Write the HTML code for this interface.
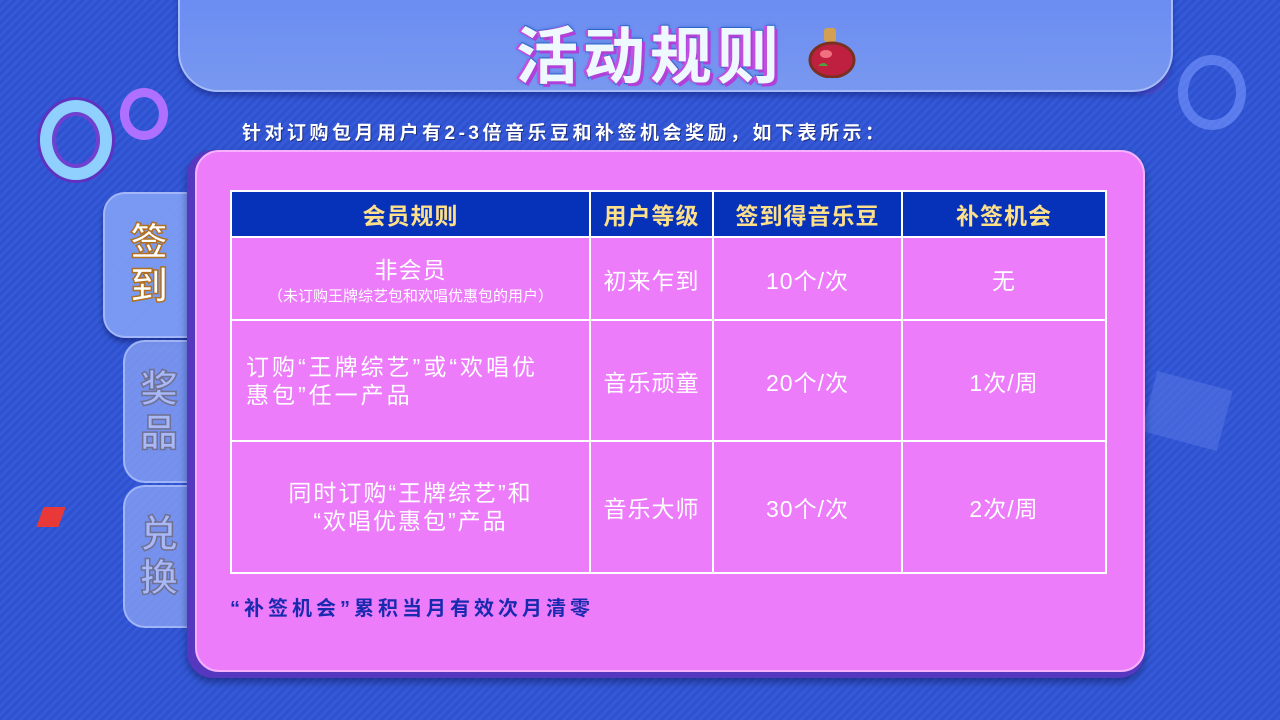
<!DOCTYPE html>
<html><head><meta charset="utf-8"><style>
*{margin:0;padding:0;box-sizing:border-box}
body{width:1280px;height:720px;overflow:hidden;background:#2f55d6;font-family:"Liberation Sans","Noto Sans CJK SC",sans-serif;position:relative}
.bg{position:absolute;inset:0;background:repeating-linear-gradient(135deg,rgba(255,255,255,0.03) 0 3px,rgba(0,0,0,0.03) 3px 6px)}
.banner{position:absolute;left:178px;top:-10px;width:995px;height:102px;background:linear-gradient(#6a8cf2,#7898f0);border-radius:0 0 40px 40px;border:2px solid #a6bcf8;box-shadow:0 4px 6px rgba(20,30,120,.5)}
.title{position:absolute;left:516px;top:6px;font-size:62px;font-weight:bold;color:#eef8ff;letter-spacing:5px;text-shadow:-3px 0 #c050e0,3px 3px #b040d8,0 0 4px #2060c0;-webkit-text-stroke:2px #3a6ad0;paint-order:stroke fill}
.pot{position:absolute;left:808px;top:26px;width:48px;height:52px}
.sub{position:absolute;left:242px;top:118px;font-size:19px;font-weight:bold;color:#fff;letter-spacing:3.5px;text-shadow:1px 1px 0 #203080}
.ring{position:absolute;border-radius:50%}
.panel{position:absolute;left:187px;top:150px;width:958px;height:528px;border-radius:26px;background:#5638c0;box-shadow:0 4px 8px rgba(0,0,40,.4)}
.inner{position:absolute;left:8px;top:0;right:0;bottom:6px;border-radius:24px;background:#ec7cfa;border:2px solid #f6b0ff}
.tab{position:absolute;border-radius:22px 0 0 22px;background:rgba(140,165,245,.75);border:2px solid rgba(190,205,255,.6);display:flex;flex-direction:column;align-items:center;justify-content:center;font-weight:bold;font-size:38px;line-height:44px}
table{position:absolute;left:230px;top:190px;border-collapse:collapse;color:#fff;text-align:center;table-layout:fixed;width:875px}
td,th{border:2px solid #fff;padding:0}
th{background:#0532b8;color:#ffe08a;font-size:23px;height:46px;letter-spacing:1px}
td{font-size:23px;letter-spacing:1px}
.note{position:absolute;left:230px;top:592px;font-size:20px;font-weight:bold;color:#1a2ab0;letter-spacing:4px}
</style></head><body>
<div class="bg"></div>
<div class="ring" style="left:40px;top:100px;width:72px;height:80px;border:12px solid #8fd0ff;box-shadow:inset 0 0 0 4px #7040d0,0 0 0 3px #6030c0"></div>
<div class="ring" style="left:120px;top:88px;width:48px;height:52px;border:9px solid #b070ff"></div>
<div class="ring" style="left:1178px;top:55px;width:68px;height:75px;border:10px solid rgba(120,150,255,.6)"></div>
<div class="ring" style="left:1120px;top:40px;width:50px;height:55px;border:8px solid rgba(100,80,220,.5)"></div>
<div style="position:absolute;left:1148px;top:380px;width:78px;height:62px;background:rgba(90,120,230,.5);transform:rotate(15deg)"></div>
<div style="position:absolute;left:40px;top:507px;width:22px;height:20px;background:#e83838;transform:skew(-20deg)"></div>
<div class="banner"></div>
<div class="title">活动规则</div>
<svg class="pot" viewBox="0 0 48 52"><rect x="16" y="2" width="12" height="14" rx="3" fill="#d2a050"/><ellipse cx="24" cy="34" rx="22" ry="17" fill="#c02040" stroke="#7a3020" stroke-width="3"/><ellipse cx="18" cy="28" rx="6" ry="4" fill="#f07080"/><path d="M10 40 q6-6 10 0" fill="#50a040"/></svg>
<div class="sub">针对订购包月用户有2-3倍音乐豆和补签机会奖励，如下表所示：</div>
<div class="tab" style="left:103px;top:192px;width:92px;height:146px;background:rgba(130,160,245,.9);color:#fff;-webkit-text-stroke:1.5px #b07020;box-shadow:0 4px 6px rgba(0,0,60,.4)">签<br>到</div>
<div class="tab" style="left:123px;top:340px;width:72px;height:143px;color:#a8b8f8;-webkit-text-stroke:1.5px #707090">奖<br>品</div>
<div class="tab" style="left:123px;top:485px;width:72px;height:143px;color:#a8b8f8;-webkit-text-stroke:1.5px #707090">兑<br>换</div>
<div class="panel"><div class="inner"></div></div>
<table>
<colgroup><col style="width:359px"><col style="width:123px"><col style="width:189px"><col style="width:204px"></colgroup>
<tr><th>会员规则</th><th>用户等级</th><th>签到得音乐豆</th><th>补签机会</th></tr>
<tr style="height:83px"><td><div style="font-size:23px">非会员</div><div style="font-size:15px;letter-spacing:0">（未订购王牌综艺包和欢唱优惠包的用户）</div></td><td>初来乍到</td><td>10个/次</td><td>无</td></tr>
<tr style="height:121px"><td style="text-align:left;padding-left:14px;line-height:28px;letter-spacing:3px;white-space:nowrap">订购“王牌综艺”或“欢唱优<br>惠包”任一产品</td><td>音乐顽童</td><td>20个/次</td><td>1次/周</td></tr>
<tr style="height:132px"><td style="line-height:28px;letter-spacing:2px">同时订购“王牌综艺”和<br>“欢唱优惠包”产品</td><td>音乐大师</td><td>30个/次</td><td>2次/周</td></tr>
</table>
<div class="note">“补签机会”累积当月有效次月清零</div>
</body></html>
